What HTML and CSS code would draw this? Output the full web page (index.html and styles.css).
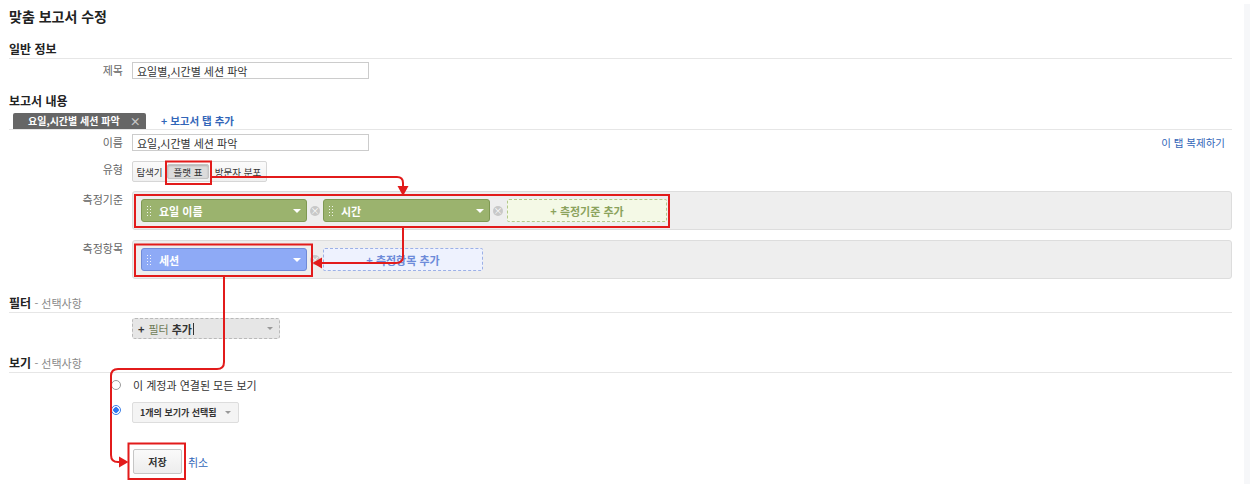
FILE: index.html
```html
<!DOCTYPE html>
<html lang="ko">
<head>
    <meta charset="UTF-8">
    <title>맞춤 보고서 수정</title>
    <link rel="stylesheet" href="styles.css">
</head>
<body>
    <div class="page">
        <div class="main">
            <h1 class="title">맞춤 보고서 수정</h1>

            <!-- General info -->
            <h2 class="section">일반 정보</h2>
            <div class="row r-title">
                <label class="lbl">제목</label>
                <div class="field"><input class="text" type="text" value="요일별,시간별 세션 파악"></div>
            </div>

            <!-- Report content -->
            <h2 class="section no-line sec-content">보고서 내용</h2>
            <div class="tabs">
                <span class="tab">요일,시간별 세션 파악<span class="tab-x">×</span></span>
                <a href="#" class="tab-add">+ 보고서 탭 추가</a>
            </div>
            <div class="row r-name">
                <label class="lbl">이름</label>
                <div class="field split">
                    <input class="text" type="text" value="요일,시간별 세션 파악">
                    <a href="#" class="copy">이 탭 복제하기</a>
                </div>
            </div>
            <div class="row r-type">
                <label class="lbl">유형</label>
                <div class="field">
                    <div class="seg">
                        <span class="seg-btn w-explore">탐색기</span>
                        <span class="seg-btn w-flat active">플랫 표</span>
                        <span class="seg-btn w-map">방문자 분포</span>
                    </div>
                </div>
            </div>
            <div class="row r-dim">
                <label class="lbl">측정기준</label>
                <div class="field well">
                    <div class="chip green"><span class="grip"></span><span class="chip-text">요일 이름</span><span class="caret"></span></div>
                    <span class="rm">×</span>
                    <div class="chip green w2"><span class="grip"></span><span class="chip-text">시간</span><span class="caret"></span></div>
                    <span class="rm">×</span>
                    <div class="add green-add">+ 측정기준 추가</div>
                </div>
            </div>
            <div class="row r-metric">
                <label class="lbl">측정항목</label>
                <div class="field well">
                    <div class="chip blue"><span class="grip"></span><span class="chip-text">세션</span><span class="caret"></span></div>
                    <span class="rm">×</span>
                    <div class="add blue-add">+ 측정항목 추가</div>
                </div>
            </div>

            <!-- Filter -->
            <h2 class="section sec-opt">필터 <span class="opt">- 선택사항</span></h2>
            <div class="row r-filter">
                <span class="lbl"></span>
                <div class="field">
                    <div class="filter"><b>+</b> <span class="f-word">필터</span> <b>추가</b><span class="cursor"></span><span class="caret grey"></span></div>
                </div>
            </div>

            <!-- Views -->
            <h2 class="section sec-opt">보기 <span class="opt">- 선택사항</span></h2>
            <div class="row r-radio">
                <span class="lbl"><span class="radio"></span></span>
                <div class="field radio-text">이 계정과 연결된 모든 보기</div>
            </div>
            <div class="row r-radio2">
                <span class="lbl"><span class="radio on"></span></span>
                <div class="field">
                    <div class="views">1개의 보기가 선택됨<span class="caret grey"></span></div>
                </div>
            </div>
            <div class="row r-actions">
                <span class="lbl"></span>
                <div class="field">
                    <button class="save">저장</button>
                    <a href="#" class="cancel">취소</a>
                </div>
            </div>
        </div>
        <div class="side"></div>

        <!-- red annotations drawn over the form -->
        <svg class="marks" width="1250" height="484" viewBox="0 0 1250 484">
            <g fill="none" stroke="#e21b1b" stroke-width="2">
                <rect x="166" y="161.5" width="45" height="22.5"/>
                <rect x="135" y="195" width="534" height="32"/>
                <rect x="135" y="244.5" width="177" height="31.5"/>
                <rect x="128.5" y="443.5" width="56.5" height="35.5"/>
                <path d="M211 177 H397 Q403 177 403 183 V188"/>
                <path d="M403 227 V256 Q403 263 396 263 H321"/>
                <path d="M224 276 V362 Q224 369 217 369 H118 Q111 369 111 376 V455 Q111 462 118 462 H120"/>
            </g>
            <g fill="#e21b1b">
                <polygon points="397.5,186 408.5,186 403,196"/>
                <polygon points="322,257.5 322,268.5 312.5,263"/>
                <polygon points="119,456.5 119,467.5 128.5,462"/>
            </g>
        </svg>
    </div>
</body>
</html>
```

FILE: styles.css
```css
body {
    margin: 0;
    font-family: "Noto Sans CJK KR", "Noto Sans", sans-serif;
    font-size: 11px;
    color: #333;
    background: #fff;
}
a {
    text-decoration: none;
    color: #3266b8;
}
.page {
    position: relative;
    display: flex;
    width: 1250px;
    height: 484px;
    overflow: hidden;
}
.main {
    width: 1232px;
    box-sizing: border-box;
    padding-left: 9px;
}
.side {
    flex: 1;
    margin: 4px 0 0 12px;
    background: #f6f7f9;
}
.title {
    margin: 0;
    padding-top: 6px;
    font-size: 14px;
    line-height: 20px;
    font-weight: bold;
    color: #222;
}
.section {
    margin: 14px 0 0;
    font-size: 12px;
    line-height: 18px;
    font-weight: bold;
    color: #222;
    border-bottom: 1px solid #e6e6e6;
}
.section.no-line {
    border-bottom: none;
}
.sec-content {
    margin-top: 13px;
}
.sec-opt {
    margin-top: 15px;
}
.opt {
    font-weight: normal;
    font-size: 11px;
    color: #888;
}

/* label + field rows */
.row {
    display: grid;
    grid-template-columns: 114px 1fr;
    column-gap: 9px;
    align-items: start;
}
.lbl {
    text-align: right;
    line-height: 17px;
    color: #666;
}
.field {
    display: flex;
    align-items: center;
}
.split {
    justify-content: space-between;
}
.text {
    width: 237px;
    height: 17px;
    box-sizing: border-box;
    margin: 0;
    padding: 0 4px;
    border: 1px solid #ccc;
    font: inherit;
    font-size: 11px;
    color: #333;
}
.r-title { margin-top: 3px; }
.r-name { margin-top: 4px; }
.r-type { margin-top: 10px; }
.r-dim { margin-top: 9px; }
.r-metric { margin-top: 10px; }
.r-filter { margin-top: 5px; }
.r-radio { margin-top: 4px; line-height: 16px; }
.r-radio2 { margin-top: 8px; }
.r-actions { margin-top: 26px; }

.radio-text {
    margin-left: 1px;
}
.copy {
    margin-right: 7px;
    font-size: 10.5px;
}

/* tabs */
.tabs {
    display: flex;
    align-items: flex-end;
    height: 16px;
    margin-top: 3px;
    border-bottom: 1px solid #e6e6e6;
}
.tab {
    display: flex;
    width: 133px;
    height: 16px;
    box-sizing: border-box;
    margin-left: 4px;
    padding-left: 15px;
    background: #666;
    border-radius: 2px 2px 0 0;
    color: #fff;
    font-weight: bold;
    font-size: 10px;
    line-height: 16px;
    white-space: nowrap;
}
.tab-x {
    margin-left: 10px;
    color: #c8c8c8;
    font-size: 11px;
}
.tab-add {
    margin-left: 15px;
    font-weight: bold;
    font-size: 10.5px;
    line-height: 16px;
}

/* type toggle */
.seg {
    display: flex;
    height: 21px;
    box-sizing: border-box;
    border: 1px solid #d6d6d6;
    border-radius: 2px;
    background: linear-gradient(#fbfbfb, #f0f0f0);
}
.seg-btn {
    display: flex;
    align-items: center;
    justify-content: center;
    font-size: 9.5px;
    color: #333;
    white-space: nowrap;
}
.w-explore { width: 33px; }
.w-flat { width: 42px; }
.w-map { width: 56px; }
.seg-btn.active {
    margin: 2px 1px;
    background: #dcdcdc;
    border: 1px solid #c4c4c4;
    border-radius: 2px;
    box-shadow: inset 0 1px 2px rgba(0, 0, 0, 0.2);
    box-sizing: border-box;
}

/* grey wells with chips */
.well {
    height: 39px;
    box-sizing: border-box;
    padding: 7px 8px;
    background: #eee;
    border: 1px solid #ddd;
    border-radius: 3px;
}
.chip {
    display: flex;
    align-items: center;
    width: 166px;
    height: 23px;
    box-sizing: border-box;
    padding: 0 5px 0 4px;
    border-radius: 3px;
    color: #fff;
    font-weight: bold;
}
.chip.w2 { width: 167px; }
.green {
    background: #9bb36e;
    border: 1px solid #7f9953;
}
.blue {
    background: #8eaaf6;
    border: 1px solid #6f8ad8;
}
.grip {
    width: 5px;
    height: 12px;
    background-image: radial-gradient(circle, rgba(255, 255, 255, 0.85) 0.6px, transparent 0.8px);
    background-size: 3px 3px;
}
.chip-text {
    margin-left: 8px;
}
.caret {
    margin-left: auto;
    width: 0;
    height: 0;
    border-top: 4px solid #fff;
    border-left: 4px solid transparent;
    border-right: 4px solid transparent;
}
.caret.grey {
    border-top-color: #999;
    border-top-width: 3px;
    border-left-width: 3px;
    border-right-width: 3px;
}
.rm {
    width: 10px;
    height: 10px;
    margin: 0 3px;
    border-radius: 50%;
    background: #c8c8c8;
    color: #fff;
    font-size: 9px;
    line-height: 10px;
    text-align: center;
}
.add {
    display: flex;
    align-items: center;
    justify-content: center;
    width: 160px;
    height: 23px;
    box-sizing: border-box;
    border-radius: 2px;
    font-weight: bold;
}
.green-add {
    margin-left: 1px;
    background: #f4f9e6;
    border: 1px dashed #b4c98a;
    color: #8ba25c;
}
.blue-add {
    background: #eef2fe;
    border: 1px dashed #9db1e6;
    color: #6d8bd9;
}

/* filter */
.filter {
    display: flex;
    align-items: center;
    width: 148px;
    height: 21px;
    box-sizing: border-box;
    padding: 0 6px 0 5px;
    background: #e6e6e6;
    border: 1px dashed #b9b9b9;
    border-radius: 3px;
    color: #333;
}
.filter b {
    font-weight: bold;
}
.f-word {
    margin: 0 3px 0 4px;
    color: #6f7c57;
}
.cursor {
    width: 1px;
    height: 12px;
    margin-left: 1px;
    background: #333;
}

/* views */
.radio {
    display: inline-block;
    width: 10px;
    height: 10px;
    box-sizing: border-box;
    margin: 3px 2px 0 0;
    border: 1px solid #9a9a9a;
    border-radius: 50%;
    background: #fff;
    vertical-align: top;
}
.r-radio2 .lbl {
    line-height: 14px;
}
.radio.on {
    border-color: #3d7fe6;
    background: radial-gradient(circle, #2e78f0 2.5px, #fff 3px);
}
.views {
    display: flex;
    align-items: center;
    width: 107px;
    height: 21px;
    box-sizing: border-box;
    padding: 0 7px;
    background: #f4f4f4;
    border: 1px solid #ddd;
    border-radius: 2px;
    font-size: 9px;
    font-weight: bold;
    white-space: nowrap;
}
.save {
    width: 49px;
    height: 25px;
    margin-left: 1px;
    padding: 0;
    background: linear-gradient(#fafafa, #ededed);
    border: 1px solid #c6c6c6;
    border-radius: 2px;
    font-family: inherit;
    font-size: 10px;
    font-weight: bold;
    color: #333;
}
.cancel {
    margin-left: 6px;
    font-size: 11px;
}

.marks {
    position: absolute;
    top: 0;
    left: 0;
    pointer-events: none;
}
```
